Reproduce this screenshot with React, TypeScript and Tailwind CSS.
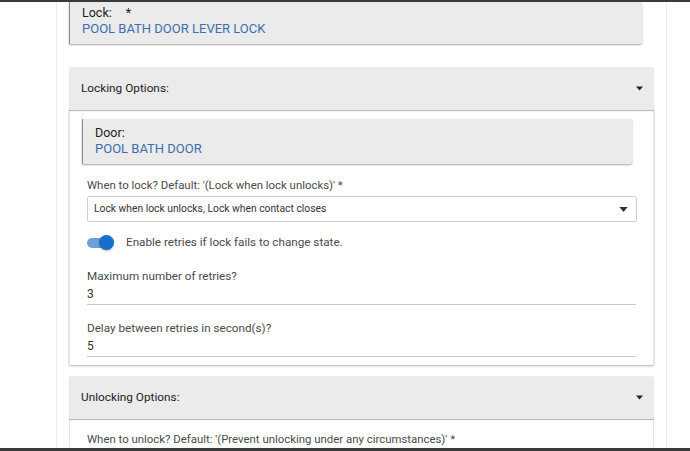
import React from 'react';

const font = { fontFamily: 'Roboto, "Liberation Sans", sans-serif' };

const Caret: React.FC<{ className?: string }> = ({ className }) => (
  <svg viewBox="0 0 10 6" className={className} fill="currentColor">
    <path d="M0 0h10L5 6z" />
  </svg>
);

const DeviceCard: React.FC<{ label: string; value: string; star?: boolean; className?: string }> = ({ label, value, star, className }) => (
  <div className={`bg-[#ebebeb] border-l border-[#8a8a8a] shadow-[0_1px_2px_rgba(0,0,0,0.35)] rounded-r-[2px] px-3 ${className ?? ''}`}>
    <div className="text-[12.5px] leading-4 text-[#222]">
      {label}
      {star && <span className="ml-[14px]">*</span>}
    </div>
    <div className="text-[13px] leading-4 text-[#3b6fae]">{value}</div>
  </div>
);

const SectionHeader: React.FC<{ title: string }> = ({ title }) => (
  <div className="h-[43px] bg-[#ebebeb] rounded-t-[3px] shadow-[0_1px_1px_rgba(0,0,0,0.3)] flex items-center justify-between pl-3 pr-[11px] relative z-10">
    <span className="text-[11.8px] text-[#222]">{title}</span>
    <Caret className="w-[7px] h-[5px] text-[#222]" />
  </div>
);

const TextField: React.FC<{ label: string; value: string }> = ({ label, value }) => (
  <div>
    <div className="text-[11.7px] leading-4 text-[#4a4a4a]">{label}</div>
    <div className="mt-[2px] text-[12px] leading-4 text-[#333] pb-[2px] border-b border-[#c8c8c8]">{value}</div>
  </div>
);

export default function App() {
  return (
    <div className="w-[690px] h-[451px] overflow-hidden bg-white flex flex-col" style={font}>
      <div className="h-[2px] bg-[#3a3a3a] shrink-0" />
      <div className="flex-1 overflow-hidden ml-[56px] w-[611px] border-l border-r border-[#ececec]">
        <div className="pl-[12px] pr-[12px]">
          {/* Lock device */}
          <DeviceCard label="Lock:" value="POOL BATH DOOR LEVER LOCK" star className="mr-[12px] pt-[3px] pb-[7px]" />

          {/* Locking Options */}
          <div className="mt-[23px]">
            <SectionHeader title="Locking Options:" />
            <div className="bg-white border-l border-r border-[#e4e4e4] shadow-[0_1px_2px_rgba(0,0,0,0.3)] pt-[9px] pb-[8px]">
              <DeviceCard label="Door:" value="POOL BATH DOOR" className="ml-[12px] w-[550px] pt-[6px] pb-[7px]" />
              <div className="px-[17px]">
                <div className="mt-[13px] text-[11.4px] leading-4 text-[#4a4a4a]">
                  When to lock? Default: '(Lock when lock unlocks)' *
                </div>
                <div className="mt-[3px] h-[26px] w-[550px] border border-[#cfcfcf] rounded-[2px] flex items-center justify-between pl-[6px] pr-[8px]">
                  <span className="text-[10.3px] text-[#333]">Lock when lock unlocks, Lock when contact closes</span>
                  <Caret className="w-[9px] h-[5px] text-[#333]" />
                </div>
                <div className="mt-[12px] h-[18px] flex items-center">
                  <div className="relative w-[22px] h-[10px]">
                    <div className="absolute inset-0 rounded-full bg-[#6d9fd9]" />
                    <div className="absolute right-[-5px] top-[-3px] w-[15px] h-[15px] rounded-full bg-[#1a6dcc] shadow-[0_1px_2px_rgba(0,0,0,0.3)]" />
                  </div>
                  <span className="ml-[17px] text-[11.7px] text-[#4a4a4a]">Enable retries if lock fails to change state.</span>
                </div>
                <div className="mt-[16px]">
                  <TextField label="Maximum number of retries?" value="3" />
                </div>
                <div className="mt-[15px]">
                  <TextField label="Delay between retries in second(s)?" value="5" />
                </div>
              </div>
            </div>
          </div>

          {/* Unlocking Options */}
          <div className="mt-[11px]">
            <SectionHeader title="Unlocking Options:" />
            <div className="bg-white border-l border-r border-[#e4e4e4] px-[17px] pt-[12px]">
              <div className="text-[11.4px] leading-4 text-[#4a4a4a]">
                When to unlock? Default: '(Prevent unlocking under any circumstances)' *
              </div>
            </div>
          </div>
        </div>
      </div>
      <div className="h-[3px] bg-[#3a3a3a] shrink-0" />
    </div>
  );
}
